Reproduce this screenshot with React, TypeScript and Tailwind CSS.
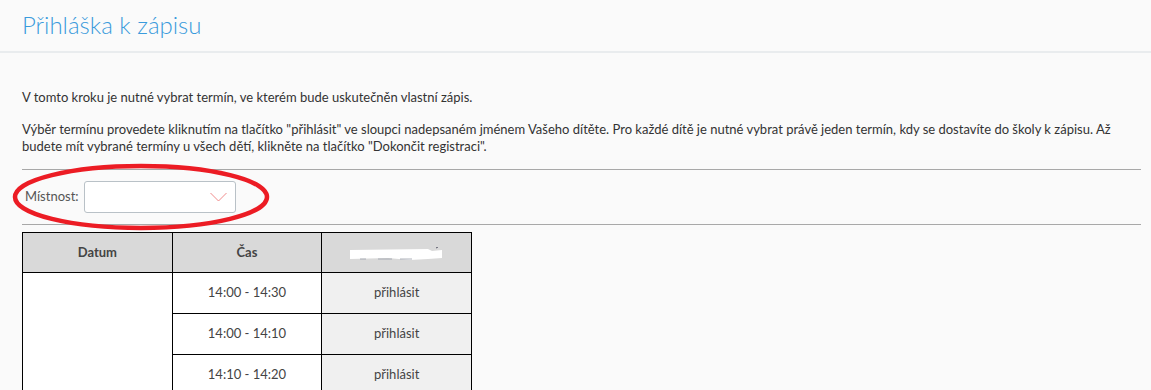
import React from "react";

export default function App() {
  const rows = ["14:00 - 14:30", "14:00 - 14:10", "14:10 - 14:20"];
  return (
    <div className="relative min-h-[390px] w-full overflow-hidden bg-[#fafafa] text-[13px] text-[#333]" style={{ fontFamily: "Lato, 'Open Sans', sans-serif" }}>
      <div className="h-[53px] border-b-2 border-[#e9ecee] px-[22px] pt-[8px]">
        <h1 className="text-[24px] font-light leading-[34px] text-[#3a9bdc]">Přihláška k zápisu</h1>
      </div>
      <div className="px-[22px] pr-[10px]">
        <p className="mt-[36px] leading-[17px]">V tomto kroku je nutné vybrat termín, ve kterém bude uskutečněn vlastní zápis.</p>
        <p className="mt-[15px] leading-[17px]">
          Výběr termínu provedete kliknutím na tlačítko "přihlásit" ve sloupci nadepsaném jménem Vašeho dítěte. Pro každé dítě je nutné vybrat právě jeden termín, kdy se dostavíte do školy k zápisu. Až
          <br />
          budete mít vybrané termíny u všech dětí, klikněte na tlačítko "Dokončit registraci".
        </p>
        <div className="mt-[14px] h-px bg-[#a8a8a8]" />
        <div className="flex h-[54px] items-center">
          <span className="ml-[3px] text-[#555]">Místnost:</span>
          <div className="relative ml-[5px] h-[32px] w-[152px] rounded-[3px] border border-[#b9c1c7] bg-white">
            <svg className="absolute right-[8px] top-[10px]" width="17" height="10" viewBox="0 0 17 10">
              <polyline points="0.5,1 8.5,9 16.5,1" fill="none" stroke="#f08a8a" strokeWidth="1" />
            </svg>
          </div>
        </div>
        <div className="h-px bg-[#a8a8a8]" />
        <table className="mt-[7px] w-[450px] table-fixed border-collapse border border-black text-[13px]">
          <thead>
            <tr className="h-[40px] bg-[#d9d9d9]">
              <th className="border border-black font-bold text-[#444]">Datum</th>
              <th className="border border-black font-bold text-[#444]">Čas</th>
              <th className="relative border border-black font-bold text-[#444]">
                <svg className="absolute left-[26px] top-[14px]" width="96" height="18" viewBox="0 0 96 18">
                  <path d="M2,3 L80,2 L84,4 L94,3 L94,11 L80,12 L62,13 L40,11 L2,12 Z" fill="#ffffff" />
                  <path d="M12,12 L18,12 M30,12 L44,12 M52,12 L64,12" stroke="#9aa0aa" strokeWidth="0.8" />
                  <path d="M88,1 L90,0" stroke="#556" strokeWidth="1" />
                </svg>
              </th>
            </tr>
          </thead>
          <tbody>
            {rows.map((t, i) => (
              <tr key={t} className="h-[41px]">
                {i === 0 && <td rowSpan={3} className="border border-black bg-white" />}
                <td className="border border-black bg-white text-center text-[#444]">{t}</td>
                <td className="border border-black bg-[#f0f0f0] text-center text-[#444]">přihlásit</td>
              </tr>
            ))}
          </tbody>
        </table>
      </div>
      <svg className="pointer-events-none absolute left-[10px] top-[162px]" width="264" height="70" viewBox="0 0 264 70">
        <ellipse cx="131" cy="35" rx="126" ry="31" fill="none" stroke="#ec1c24" strokeWidth="4.5" />
      </svg>
    </div>
  );
}
